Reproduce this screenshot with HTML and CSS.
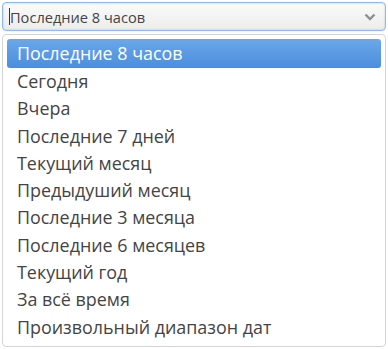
FILE: index.html
```html
<!DOCTYPE html>
<html>
<head>
  <title>Период</title>
  <link rel="stylesheet" href="styles.css">
</head>
<body>
  <div class="picker">
    <div class="select">
      <span class="caret"></span>
      <span class="value">Последние 8 часов</span>
      <svg class="chevron" width="12" height="8" viewBox="0 0 12 8">
        <path d="M1.5 1.5 L6 6 L10.5 1.5" fill="none" stroke="#8f8f8f" stroke-width="2.4"/>
      </svg>
    </div>
    <ul class="options">
      <li class="active">Последние 8 часов</li>
      <li>Сегодня</li>
      <li>Вчера</li>
      <li>Последние 7 дней</li>
      <li>Текущий месяц</li>
      <li>Предыдуший месяц</li>
      <li>Последние 3 месяца</li>
      <li>Последние 6 месяцев</li>
      <li>Текущий год</li>
      <li>За всё время</li>
      <li>Произвольный диапазон дат</li>
    </ul>
  </div>
</body>
</html>
```
FILE: styles.css
```css
body {
  margin: 0;
  padding: 2px;
  font-family: "Open Sans", sans-serif;
  background-color: #fff;
  color: #444;
}
.picker {
  width: 384px;
}
.select {
  display: flex;
  align-items: center;
  height: 27px;
  padding: 0 9px 0 6px;
  border: 1px solid #8cb9ef;
  border-radius: 4px;
  box-shadow: inset 0 0 2px rgba(90,150,230,0.5);
  background: linear-gradient(#fbfbfb, #ececec);
  font-size: 14.6px;
  color: #444;
}
.caret {
  width: 1px;
  height: 17px;
  background-color: #333;
}
.value {
  flex: 1;
}
.chevron {
  display: block;
}
.options {
  list-style: none;
  margin: 3px 0 0;
  padding: 4px 4px 0;
  border: 1px solid #d4d4d4;
  border-radius: 4px;
  box-sizing: border-box;
  height: 313px;
  background-color: #fff;
  font-size: 17.9px;
}
.options li {
  height: 27.3px;
  line-height: 27.3px;
  padding: 0 10px;
  white-space: nowrap;
}
.options li.active {
  height: 29px;
  line-height: 29px;
  color: #fff;
  border-radius: 3px;
  background: linear-gradient(#6aa8ea, #4c8ddd);
}
```
